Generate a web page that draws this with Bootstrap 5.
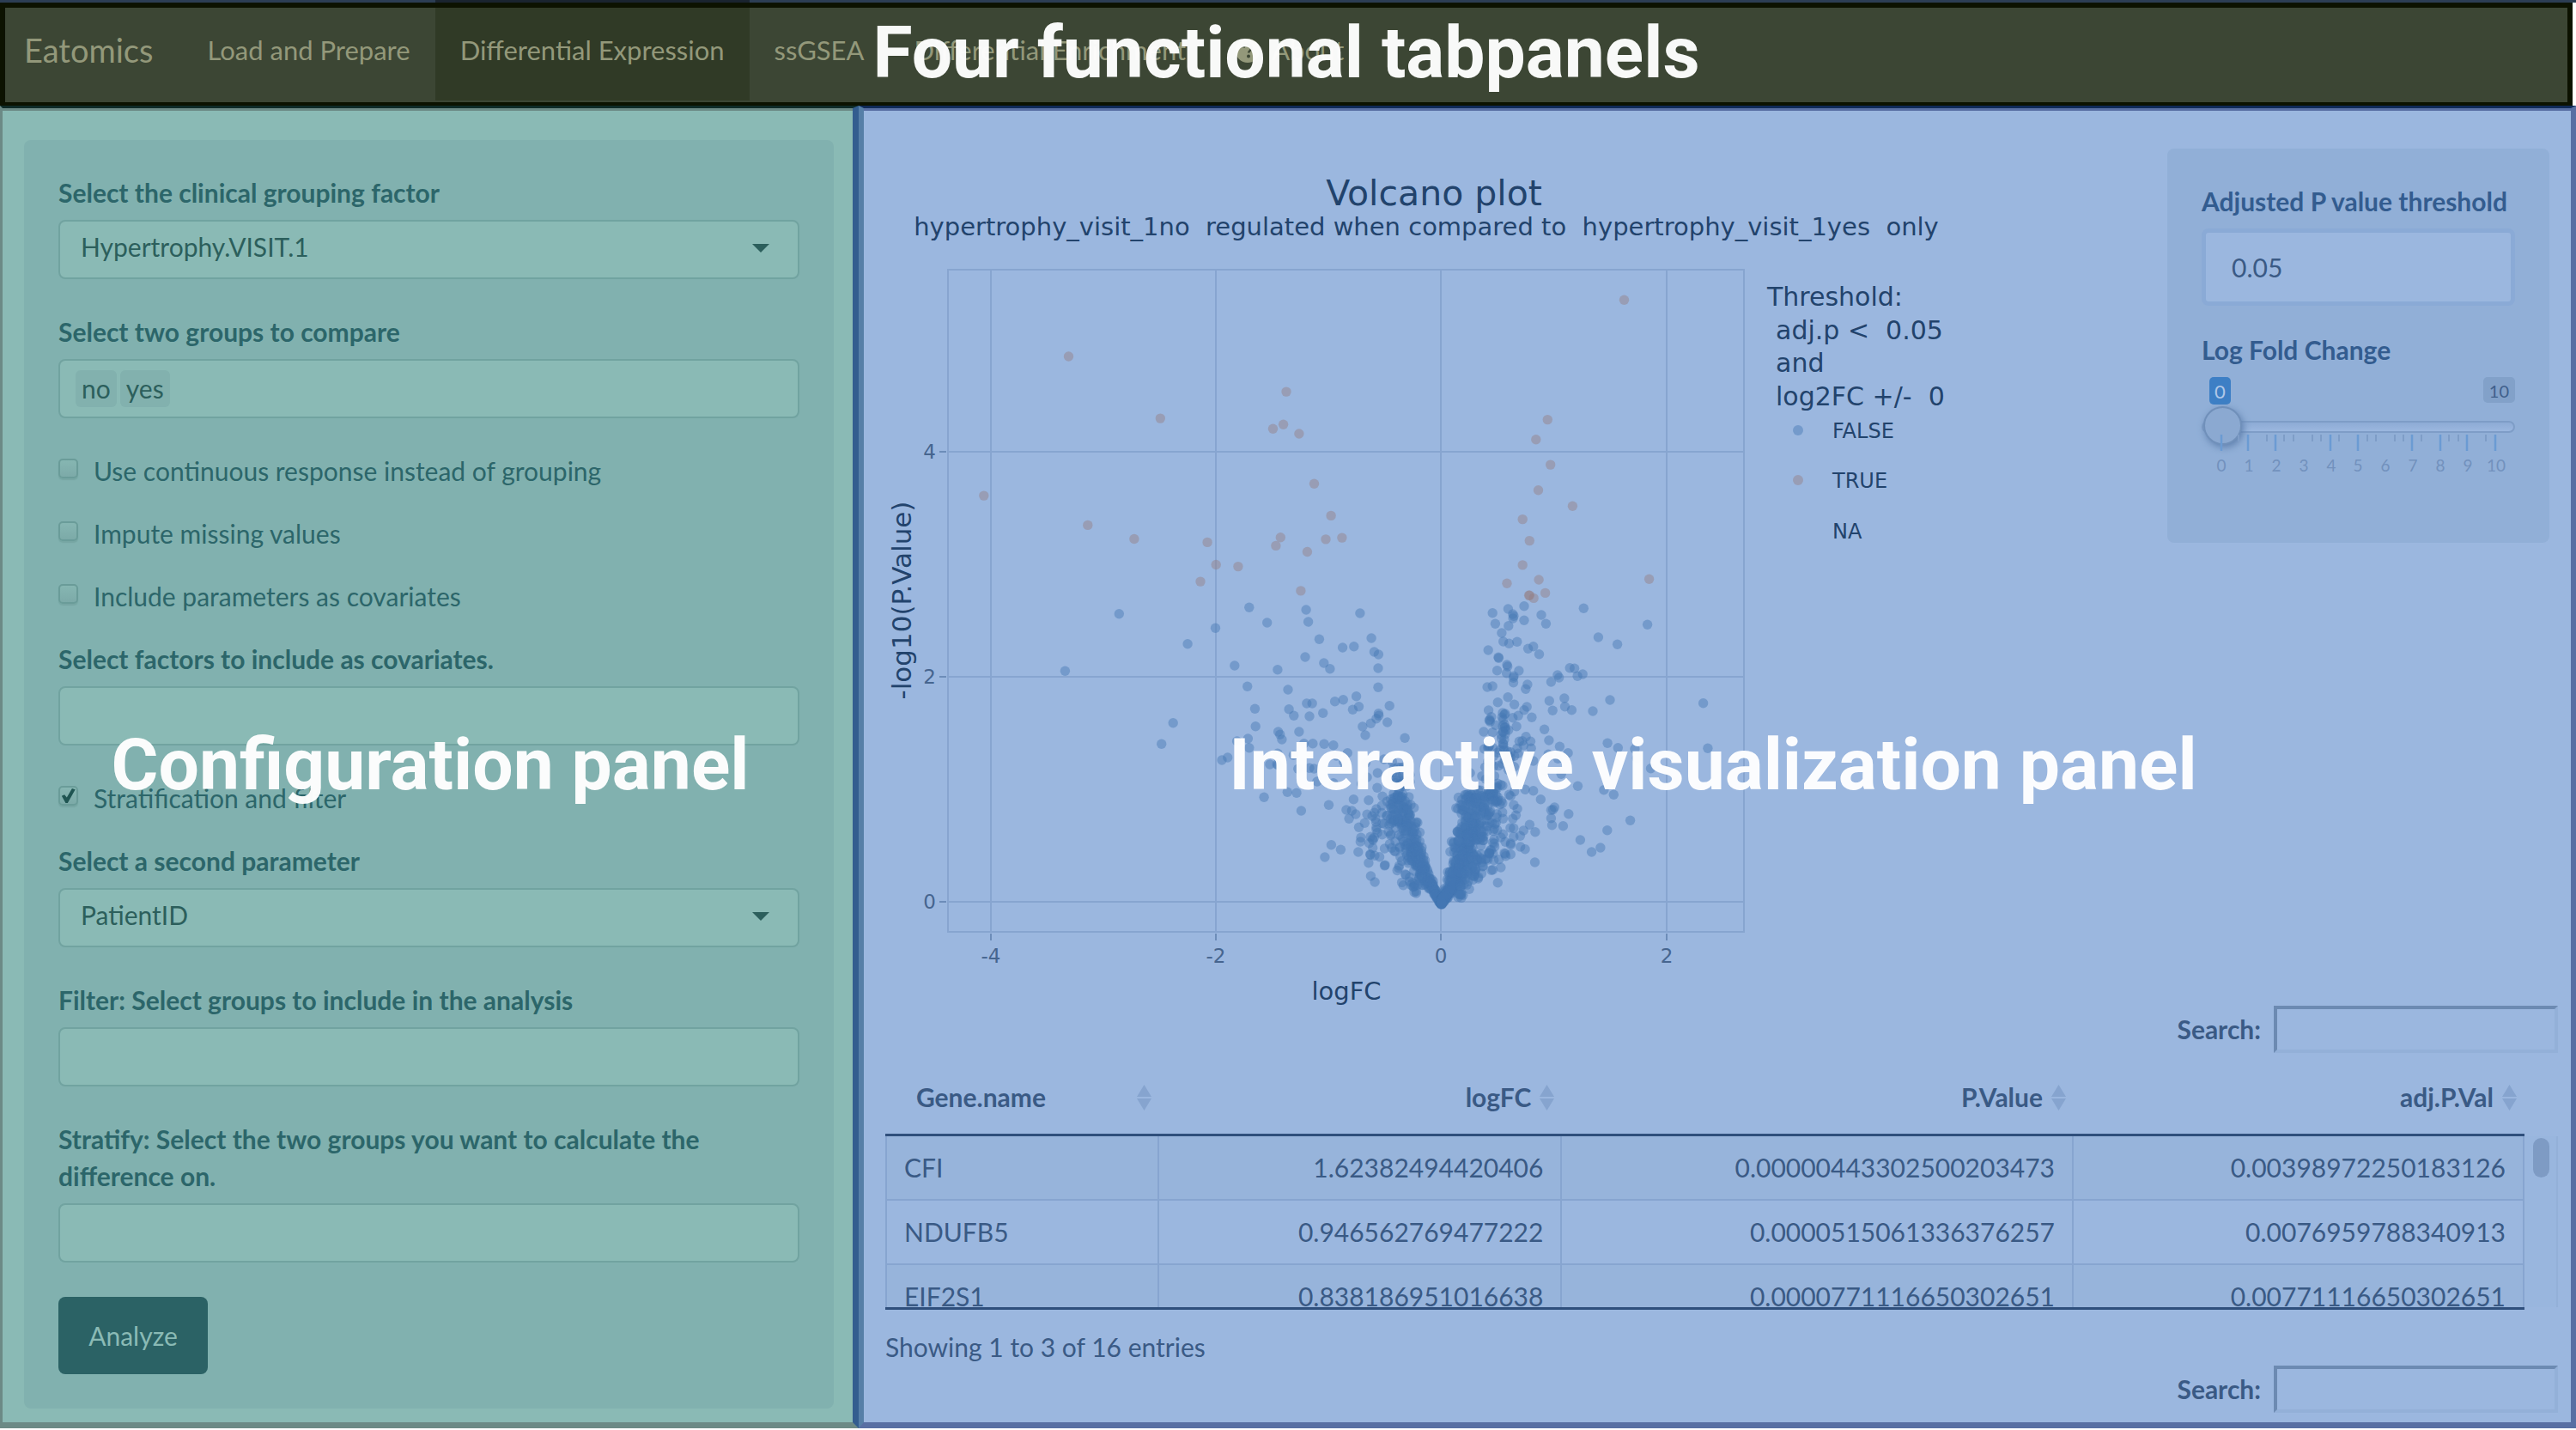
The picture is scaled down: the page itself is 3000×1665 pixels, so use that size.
<!DOCTYPE html>
<html lang="en">
<head>
<meta charset="utf-8">
<meta name="viewport" content="width=device-width, initial-scale=1">
<title>Eatomics</title>
<link href="https://cdn.jsdelivr.net/npm/bootstrap@5.3.0/dist/css/bootstrap.min.css" rel="stylesheet">
<style>
  body { font-family: Lato, "Liberation Sans", sans-serif; font-size: 30px; line-height: 43px; background: #fff; color: #2c666a; }

  /* navigation */
  .topbar { border-top: 3px solid #2c3e54; padding-right: 4px; }
  .topnav { height: 120px; padding: 0; background: #3c4634; border: 6px solid #0c1200; border-bottom-width: 4px; align-items: flex-start; }
  .topnav .navbar-brand { font-size: 38px; line-height: 43px; padding: 28px 34px 0 22px; margin: 0; color: #93987a; }
  .topnav .navbar-nav .nav-link { color: #93987a; font-size: 31px; padding: 28px 29px 37px; position: relative; }
  .topnav .navbar-nav .nav-link.active { background: #303a26; color: #93987a; }
  .topnav .nav-link.active::before { content: ""; position: absolute; left: 0; right: 0; top: -9px; height: 3px; background: #1a242f; }
  .help-icon { width: 28px; height: 28px; margin-right: 14px; }

  /* big captions lying over the panels */
  .caption-over { position: absolute; left: 0; right: 0; z-index: 5; text-align: center; pointer-events: none; font: 700 84px/100px Roboto, sans-serif; color: #fff; opacity: .97; white-space: nowrap; }
  .topbar .caption-over { top: 9px; right: 4px; }
  .pane .caption-over { top: 715px; }
  .pane-config .caption-over { left: 6px; }
  .pane-view .caption-over { right: 10px; }

  /* panels */
  .pane { position: relative; border-style: solid; }
  .pane-config { background: #8abab5; border-width: 3px 7px 7px 3px; border-color: #0f2b28 #335d8f #6c8a86 #6c8a86; box-shadow: inset 0 3px #6c8a86; padding: 37px 22px 16px 25px; }
  .pane-view { background: #9bb7df; border-width: 3px 6px 7px 6px; border-color: #0f2a57 #586fa3 #586fa3 #567fa7; box-shadow: inset 0 3px #586fa3; padding: 3px 15px 11px 25px; color: #3a5a85; }
  .tinted { border-radius: 8px; padding: 40px; }
  .pane-config .tinted { background: #81b1af; }
  .pane-view .tinted { background: #91afd7; width: 445px; height: 459px; margin: 44px 10px 0 0; flex: none; color: #335c8f; }
  .field-label { display: block; font-weight: 700; margin-bottom: 10px; }
  .field { margin-bottom: 40px; }
  .field-box { display: flex; align-items: center; gap: 4px; width: 100%; height: 69px; background: #8abab5; border: 2px solid #71a3a0; border-radius: 8px; padding: 0 24px; color: #2c5f5c; }
  select.field-box { appearance: none; padding-bottom: 6px; }
  .picker { position: relative; }
  .picker::after { content: ""; position: absolute; right: 35px; top: 28px; border: 10px solid transparent; border-top-color: #2c5f5c; border-bottom: 0; }
  .tags { padding: 0 18px; }
  .tag { background: #82b1ae; border-radius: 6px; padding: 0 7px; }
  .tags input { flex: 1; min-width: 0; border: 0; background: none; outline: 0; }
  .tick-row { display: flex; gap: 18px; margin-bottom: 30px; }
  .tick-row input { appearance: none; flex: none; width: 23px; height: 23px; margin: 7px 0 0; border: 2px solid #6a9c99; border-radius: 5px; background: linear-gradient(#86b6b2, #7caaa8); box-shadow: 0 2px 1px #76a6a3; }
  .tick-row input:checked::before { content: ""; display: block; width: 17px; height: 17px; margin: 1px; background: #1f5552; clip-path: polygon(5% 52%, 24% 42%, 40% 62%, 76% 0, 98% 8%, 46% 100%, 32% 100%); }
  .btn-analyze { display: block; width: 174px; height: 90px; border: 0; border-radius: 8px; background: #2b6265; color: #8abab5; font-size: 30px; line-height: 43px; padding: 0; }

  /* threshold controls */
  .num-box { display: block; width: 100%; height: 90px; border: 5px solid #8aaad6; border-radius: 8px; background: #9bb7df; color: #3a5a85; padding: 0 30px; margin-bottom: 30px; }
  .slide-values { display: flex; justify-content: space-between; align-items: flex-start; padding-left: 9px; }
  .slide-values span { border-radius: 5px; background: #82a1c9; color: #40608c; font-size: 20px; line-height: 28px; padding: 2px 7px 0; }
  .slide-values .now { background: #3d7fc5; color: #b0c8e8; font-size: 22px; line-height: 30px; padding: 2px 6px 0; }
  .slide { appearance: none; display: block; width: 100%; height: 46px; margin: 3px 0 0; background: none; }
  .slide::-webkit-slider-runnable-track { height: 14px; border: 2px solid #7e9dc7; border-radius: 8px; background: linear-gradient(#8dabd5, #9bb7df); }
  .slide::-webkit-slider-thumb { appearance: none; width: 45px; height: 45px; margin-top: -19px; border: 2px solid #7090ba; border-radius: 50%; background: #8ba9d1; box-shadow: 2px 3px 8px #5f80ae; }
  .slide-scale { display: block; width: 100%; margin-top: -15px; }

  /* plot */
  .plot { flex: 1; min-width: 0; }
  .plot svg { display: block; width: 100%; font-family: "DejaVu Sans", sans-serif; fill: #22436c; }
  .plot text { white-space: pre; }

  /* table */
  .find { display: flex; justify-content: flex-end; align-items: center; gap: 15px; font-weight: 700; }
  .find input { width: 331px; height: 55px; border: 4px solid; border-color: #6c8ab2 #93b0d8 #93b0d8 #6c8ab2; background: none; }
  .genes-clip { flex: 1; min-width: 0; height: 299px; overflow: hidden; border-bottom: 3px solid #2f4f7c; }
  .genes { width: 100%; table-layout: fixed; border-collapse: separate; border-spacing: 0; text-align: right; }
  .genes th { padding: 30px 9px 21px 36px; border-bottom: 3px solid #2f4f7c; line-height: 43px; }
  .genes .head { display: flex; align-items: center; justify-content: flex-end; gap: 10px; }
  .genes th:first-child .head { justify-content: space-between; }
  .genes th svg { width: 17px; height: 30px; fill: #86a4cf; flex: none; }
  .genes td { padding: 14px 20px; height: 75px; border-right: 2px solid #87a5d0; border-bottom: 2px solid #87a5d0; }
  .genes td:first-child { border-left: 2px solid #87a5d0; }
  .genes th:first-child, .genes td:first-child { text-align: left; }
  .genes tbody tr:nth-child(odd) { background: #97b4db; }
  .rail { width: 39px; margin: 97px 0 3px; border-right: 2px solid #93b0d8; padding: 2px 8px 0 10px; background: #99b6de; }
  .rail div { height: 46px; border-radius: 10px; background: #7e9bc4; }
  .entries { margin: 22px 0 0; }
</style>
<script src="https://cdn.jsdelivr.net/npm/bootstrap@5.3.0/dist/js/bootstrap.bundle.min.js"></script>
</head>
<body>
<header class="topbar position-relative">
  <nav class="navbar navbar-expand topnav">
    <a class="navbar-brand" href="#">Eatomics</a>
    <ul class="navbar-nav">
      <li class="nav-item"><a class="nav-link" href="#">Load and Prepare</a></li>
      <li class="nav-item"><a class="nav-link active" href="#">Differential Expression</a></li>
      <li class="nav-item"><a class="nav-link" href="#">ssGSEA</a></li>
      <li class="nav-item"><a class="nav-link" href="#">Differential Enrichment</a></li>
      <li class="nav-item"><a class="nav-link d-flex align-items-center" href="#"><svg class="help-icon" viewBox="0 0 28 28" aria-hidden="true"><circle cx="14" cy="14" r="14" fill="#93987a"/><path d="M9.500 10.500c.5-3 2.500-4 4.500-4 2.800 0 4.800 1.600 4.800 4 0 3-3.600 3.200-3.600 6" fill="none" stroke="#3c4634" stroke-width="2.600"/><circle cx="15" cy="20.500" r="2" fill="#3c4634"/></svg>About</a></li>
    </ul>
  </nav>
  <div class="caption-over">Four functional tabpanels</div>
</header>

<main class="row g-0">
  <section class="col-4 pane pane-config">
    <form class="tinted">
      <div class="field">
        <label class="field-label" for="factor">Select the clinical grouping factor</label>
        <div class="picker"><select class="field-box" id="factor"><option>Hypertrophy.VISIT.1</option></select></div>
      </div>
      <div class="field">
        <label class="field-label" for="groups">Select two groups to compare</label>
        <div class="field-box tags"><span class="tag">no</span><span class="tag">yes</span><input id="groups" type="text"></div>
      </div>
      <div class="tick-row"><input type="checkbox" id="c1"><label for="c1">Use continuous response instead of grouping</label></div>
      <div class="tick-row"><input type="checkbox" id="c2"><label for="c2">Impute missing values</label></div>
      <div class="tick-row"><input type="checkbox" id="c3"><label for="c3">Include parameters as covariates</label></div>
      <div class="field">
        <label class="field-label" for="cov">Select factors to include as covariates.</label>
        <input class="field-box" type="text" id="cov">
      </div>
      <div class="tick-row"><input type="checkbox" id="c4" checked><label for="c4">Stratification and filter</label></div>
      <div class="field">
        <label class="field-label" for="second">Select a second parameter</label>
        <div class="picker"><select class="field-box" id="second"><option>PatientID</option></select></div>
      </div>
      <div class="field">
        <label class="field-label" for="filt">Filter: Select groups to include in the analysis</label>
        <input class="field-box" type="text" id="filt">
      </div>
      <div class="field">
        <label class="field-label" for="strat">Stratify: Select the two groups you want to calculate the difference on.</label>
        <input class="field-box" type="text" id="strat">
      </div>
      <button class="btn btn-analyze" type="button">Analyze</button>
    </form>
    <div class="caption-over">Configuration panel</div>
  </section>

  <section class="col-8 pane pane-view">
    <div class="d-flex align-items-start">
      <div class="plot">
        <svg viewBox="1031 129 1493 1042" role="img" aria-label="Volcano plot">
          <text x="1670" y="239" font-size="41" text-anchor="middle">Volcano plot</text>
          <text x="1661" y="274" font-size="29" text-anchor="middle">hypertrophy_visit_1no  regulated when compared to  hypertrophy_visit_1yes  only</text>
          <g fill="none" stroke="#87a5d0" stroke-width="2">
            <rect x="1104" y="314" width="927" height="771"/>
            <path d="M1154 314V1085M1416 314V1085M1678 314V1085M1941 314V1085M1104 526H2031M1104 788H2031M1104 1050H2031"/>
            <path stroke="#6d8db9" d="M1154 1087v8M1416 1087v8M1678 1087v8M1941 1087v8M1102 526h-8M1102 788h-8M1102 1050h-8"/>
          </g>
          <g id="dots"></g>
          <g font-size="23" fill="#46658f">
            <g text-anchor="end"><text x="1090" y="534">4</text><text x="1090" y="796">2</text><text x="1090" y="1058">0</text></g>
            <g text-anchor="middle"><text x="1154" y="1121">-4</text><text x="1416" y="1121">-2</text><text x="1678" y="1121">0</text><text x="1941" y="1121">2</text></g>
          </g>
          <text x="1568" y="1164" font-size="29" text-anchor="middle">logFC</text>
          <text transform="translate(1061 699) rotate(-90)" font-size="31" text-anchor="middle">-log10(P.Value)</text>
          <g font-size="30">
            <text x="2058" y="356">Threshold:</text>
            <text x="2068" y="395">adj.p &lt;  0.05</text>
            <text x="2068" y="433">and</text>
            <text x="2068" y="472">log2FC +/-  0</text>
          </g>
          <g font-size="24">
            <text x="2134" y="510">FALSE</text><text x="2134" y="568">TRUE</text><text x="2134" y="627">NA</text>
          </g>
          <circle cx="2094" cy="501" r="6" fill="#4477b4" fill-opacity=".45"/>
          <circle cx="2094" cy="559" r="6" fill="#947f82" fill-opacity=".45"/>
        </svg>
      </div>
      <aside class="tinted">
        <label class="field-label" for="pval">Adjusted P value threshold</label>
        <input class="num-box" type="text" id="pval" value="0.05">
        <label class="field-label" for="lfc">Log Fold Change</label>
        <div class="slide-values"><span class="now">0</span><span>10</span></div>
        <input class="slide" type="range" id="lfc" min="0" max="10" value="0">
        <svg class="slide-scale" viewBox="2565 504 365 50" aria-hidden="true">
          <path stroke="#6b9bd3" stroke-width="2.500" d="M2588 505v19M2619 505v19M2651 505v19M2715 505v19M2747 505v19M2810 505v19M2843 505v19M2874 505v19M2907 505v19"/>
          <path stroke="#7e9dc7" stroke-width="2" d="M2608 505v8M2641 505v8M2661 505v8M2672 505v8M2694 505v8M2704 505v8M2725 505v8M2758 505v8M2768 505v8M2790 505v8M2800 505v8M2821 505v8M2853 505v8M2864 505v8M2896 505v8"/>
          <g font-size="19" fill="#7291bd" text-anchor="middle"><text x="2588" y="548">0</text><text x="2620" y="548">1</text><text x="2652" y="548">2</text><text x="2684" y="548">3</text><text x="2716" y="548">4</text><text x="2747" y="548">5</text><text x="2779" y="548">6</text><text x="2811" y="548">7</text><text x="2843" y="548">8</text><text x="2875" y="548">9</text><text x="2908" y="548">10</text></g>
        </svg>
      </aside>
    </div>

    <div class="find"><label for="find1">Search:</label><input type="text" id="find1"></div>
    <div class="d-flex">
      <div class="genes-clip">
        <table class="genes">
          <colgroup><col style="width:16.7%"><col style="width:24.6%"><col style="width:31.2%"><col style="width:27.5%"></colgroup>
          <thead><tr>
            <th><span class="head">Gene.name <svg viewBox="0 0 17 30"><path d="M0 14L8.500 0 17 14zM0 16h17L8.500 30z"/></svg></span></th>
            <th><span class="head">logFC <svg viewBox="0 0 17 30"><path d="M0 14L8.500 0 17 14zM0 16h17L8.500 30z"/></svg></span></th>
            <th><span class="head">P.Value <svg viewBox="0 0 17 30"><path d="M0 14L8.500 0 17 14zM0 16h17L8.500 30z"/></svg></span></th>
            <th><span class="head">adj.P.Val <svg viewBox="0 0 17 30"><path d="M0 14L8.500 0 17 14zM0 16h17L8.500 30z"/></svg></span></th>
          </tr></thead>
          <tbody>
            <tr><td>CFI</td><td>1.62382494420406</td><td>0.00000443302500203473</td><td>0.00398972250183126</td></tr>
            <tr><td>NDUFB5</td><td>0.946562769477222</td><td>0.0000515061336376257</td><td>0.0076959788340913</td></tr>
            <tr><td>EIF2S1</td><td>0.838186951016638</td><td>0.0000771116650302651</td><td>0.00771116650302651</td></tr>
          </tbody>
        </table>
      </div>
      <div class="rail"><div></div></div>
    </div>
    <p class="entries">Showing 1 to 3 of 16 entries</p>
    <div class="find"><label for="find2">Search:</label><input type="text" id="find2"></div>
    <div class="caption-over">Interactive visualization panel</div>
  </section>
</main>

<script>
  // Each set: [origin x, origin y, x units per pixel, y units per pixel, colour, x,y pairs]
  const sets = [
    [1020, 180, 1.479, 2.8, '#947f82', '332,658 490,860 707,773 702,880 684,894 729,910 1289,474 1157,864 1137,929 1162,1011 1141,1094 1200,1146 1114,1189 1126,1259 1114,1338 755,1073 186,1112 365,1208 445,1253 571,1264 784,1177 697,1248 689,1275 775,1254 803,1249 743,1295 586,1337 624,1343 559,1392 732,1422 1087,1398 1142,1386 1332,1384 1153,1429 1126,1437 1125,1437 1133,1446'],
    [1020, 680, 1.479, 3, '#4477b4', '419,104 643,82 585,154 537,209 618,285 326,304 640,358 512,485 492,559 622,549 641,540 643,572 606,606 596,615 653,436 654,497 692,299 674,135'],
    [1460, 660, 2.8, 3, '#4477b4', '171,150 178,192 347,162 214,253 384,249 290,282 327,278 393,297 407,306 168,315 229,336 249,356 406,354 406,421 112,429 335,452 292,464 265,470 115,497 131,520 173,477 191,477 182,522 226,511 323,499 343,488 443,485 407,512 408,520 400,530 382,547 355,558 364,588 436,543 493,598 148,576 80,576 86,586 92,603 164,617 193,617 230,619 260,623 306,650 78,652 53,690 76,690 80,692 130,658 145,706 182,703 197,705 270,660 293,680 299,700 260,755 207,750 110,787 140,790 34,805 155,852 245,832 326,812 375,815 420,802 302,849 320,852 333,864 311,880 370,865 343,910 350,946 348,960 253,971 284,988 232,1014 341,996 375,1034 382,1080 395,1101 488,1112 530,1140 380,1004 381,1006 400,846 418,834 397,880 362,895 400,910 400,918 381,943 365,685 404,720 403,772 425,672 452,680 488,700 370,735 352,758 770,534 779,161 830,147 882,137 845,165 848,172 846,180 788,199 831,206 882,187 938,168 953,199 1076,145 1284,202 809,231 814,261 833,268 859,262 765,291 912,278 895,286 931,305 1124,246 1186,271 798,316 799,319 826,342 828,348 794,362 825,371 865,363 848,382 847,388 847,404 762,420 779,417 893,411 887,427 1031,353 1046,355 1073,375 1056,382 991,378 996,387 970,402 829,455 796,473 850,481 766,501 891,489 882,500 964,468 975,502 1013,459 1015,488 1037,500 1106,504 1162,465 1466,476 820,513 818,516 812,510 775,524 768,536 771,541 845,527 863,520 907,526 818,550 820,560 812,556 857,557 750,576 779,578 822,570 820,585 808,600 948,568 888,593 876,608 866,610 903,610 880,624 905,634 963,606 998,628 1025,650 1154,616 1188,632 1481,634 817,640 752,636 862,652 1243,636 1250,668 961,655 950,712 912,678 1003,724 992,670 1295,704 812,688 755,700 706,720 848,750 885,778 912,782 936,812 1057,766 1142,779 1174,796 981,840 976,848 970,850 970,878 973,902 1009,905 1027,863 1228,886 1153,920 1065,954 1131,981 1102,996 917,1032 900,901 880,921 869,940 918,926 870,978 885,986 796,1103 806,1050 780,1058 775,1060 838,966 820,1003 818,1000 838,1004 822,1010 833,796 838,800 848,832 860,845 855,868 845,880 837,912 813,934 813,880 765,868 760,870 740,868 780,790 790,796 765,800 796,804 775,812 756,806 742,800 735,812 790,820']
  ];
  const out = [];
  const dot = (x, y, c) => out.push(`<circle cx="${x.toFixed(1)}" cy="${y.toFixed(1)}" r="5.700" fill="${c}" fill-opacity=".45"/>`);
  for (const [ox, oy, kx, ky, c, pairs] of sets)
    for (const p of pairs.split(' ')) { const [a, b] = p.split(',').map(Number); dot(ox + a / kx, oy + b / ky, c); }

  // The crowded arms of the volcano: seeded scatter round a centre line, [x, y, half-width]
  let seed = 7;
  const rnd = () => (seed = (seed * 16807) % 2147483647) / 2147483647;
  const arm = (line, n, bias) => {
    for (let i = 0; i < n; i++) {
      const t = Math.pow(rnd(), bias) * (line.length - 1), k = Math.min(Math.floor(t), line.length - 2), f = t - k;
      const v = line[k].map((q, j) => q + (line[k + 1][j] - q) * f);
      dot(1460 + (v[0] + (rnd() + rnd() - 1) * v[2]) / 2.8, 660 + (v[1] + (rnd() - .5) * 16) / 3, '#4477b4');
    }
  };
  arm([[612,1172,2],[578,1115,16],[550,1062,24],[526,1012,34],[512,940,40],[494,872,44],[474,800,44]], 300, 1.8);
  arm([[612,1172,2],[652,1105,26],[678,1040,46],[690,985,54],[704,930,54],[712,860,56],[715,780,50]], 500, 1.9);
  arm([[540,1140,20],[495,1060,70],[465,1000,90],[445,930,90],[450,860,80],[470,790,60],[485,690,40]], 120, 1);
  arm([[670,1150,16],[720,1060,50],[760,980,110],[765,900,100],[770,840,100]], 110, 1);
  arm([[700,830,40],[750,780,60],[800,840,60]], 30, 1);
  arm([[780,790,70],[800,700,70],[810,620,70],[800,520,50]], 50, 1);
  document.getElementById('dots').innerHTML = out.join('');
</script>
</body>
</html>
